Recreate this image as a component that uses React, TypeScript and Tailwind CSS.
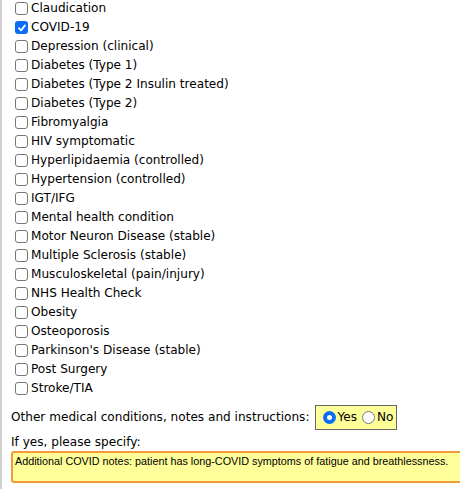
const conditions = [
  "Claudication",
  "COVID-19",
  "Depression (clinical)",
  "Diabetes (Type 1)",
  "Diabetes (Type 2 Insulin treated)",
  "Diabetes (Type 2)",
  "Fibromyalgia",
  "HIV symptomatic",
  "Hyperlipidaemia (controlled)",
  "Hypertension (controlled)",
  "IGT/IFG",
  "Mental health condition",
  "Motor Neuron Disease (stable)",
  "Multiple Sclerosis (stable)",
  "Musculoskeletal (pain/injury)",
  "NHS Health Check",
  "Obesity",
  "Osteoporosis",
  "Parkinson's Disease (stable)",
  "Post Surgery",
  "Stroke/TIA",
];

const checked = ["COVID-19"];

const Box = ({ on }: { on: boolean }) =>
  on ? (
    <span className="w-[13px] h-[13px] rounded-[3px] bg-[#0b6cf5] flex items-center justify-center shrink-0">
      <svg width="10" height="10" viewBox="0 0 10 10">
        <path d="M2 5.2 L4.1 7.4 L8 2.4" fill="none" stroke="white" strokeWidth="1.8" strokeLinecap="round" strokeLinejoin="round" />
      </svg>
    </span>
  ) : (
    <span className="w-[13px] h-[13px] rounded-[3px] border border-[#767676] bg-white shrink-0" />
  );

const Radio = ({ on }: { on: boolean }) =>
  on ? (
    <span className="w-[13px] h-[13px] rounded-full bg-[#0b6cf5] flex items-center justify-center shrink-0">
      <span className="w-[5px] h-[5px] rounded-full bg-white" />
    </span>
  ) : (
    <span className="w-[13px] h-[13px] rounded-full border border-[#767676] bg-white shrink-0" />
  );

export default function App() {
  return (
    <div className="w-[460px] h-[490px] overflow-hidden bg-white text-black font-['DejaVu_Sans',Verdana,sans-serif] text-[12.1px]">
      <div className="h-full border-l-2 border-[#cfcfcf] pl-[9px]">
        {/* condition checkboxes */}
        <div className="-mt-[1px] pl-[4px] flex flex-col">
          {conditions.map((c) => (
            <label key={c} className="h-[19px] flex items-center gap-[3px] leading-none">
              <Box on={checked.includes(c)} />
              <span>{c}</span>
            </label>
          ))}
        </div>

        {/* other conditions */}
        <div className="mt-[7px] flex items-center gap-[5px]">
          <span>Other medical conditions, notes and instructions:</span>
          <span className="h-[25px] pl-[7px] pr-[3px] bg-[#ffff99] border border-[#666] flex items-center gap-[2px]">
            <Radio on />
            <span className="mr-[3px]">Yes</span>
            <Radio on={false} />
            <span>No</span>
          </span>
        </div>

        <p className="mt-[6px] leading-none">If yes, please specify:</p>
        <div className="mt-[3px] w-[470px] h-[32px] bg-[#ffff99] border-2 border-[#f39a3c] rounded-[3px] px-[2px] pt-[1px] font-['Liberation_Sans',Arial,sans-serif] text-[10.8px] leading-[14px]">
          Additional COVID notes: patient has long-COVID symptoms of fatigue and breathlessness.
        </div>
      </div>
    </div>
  );
}
